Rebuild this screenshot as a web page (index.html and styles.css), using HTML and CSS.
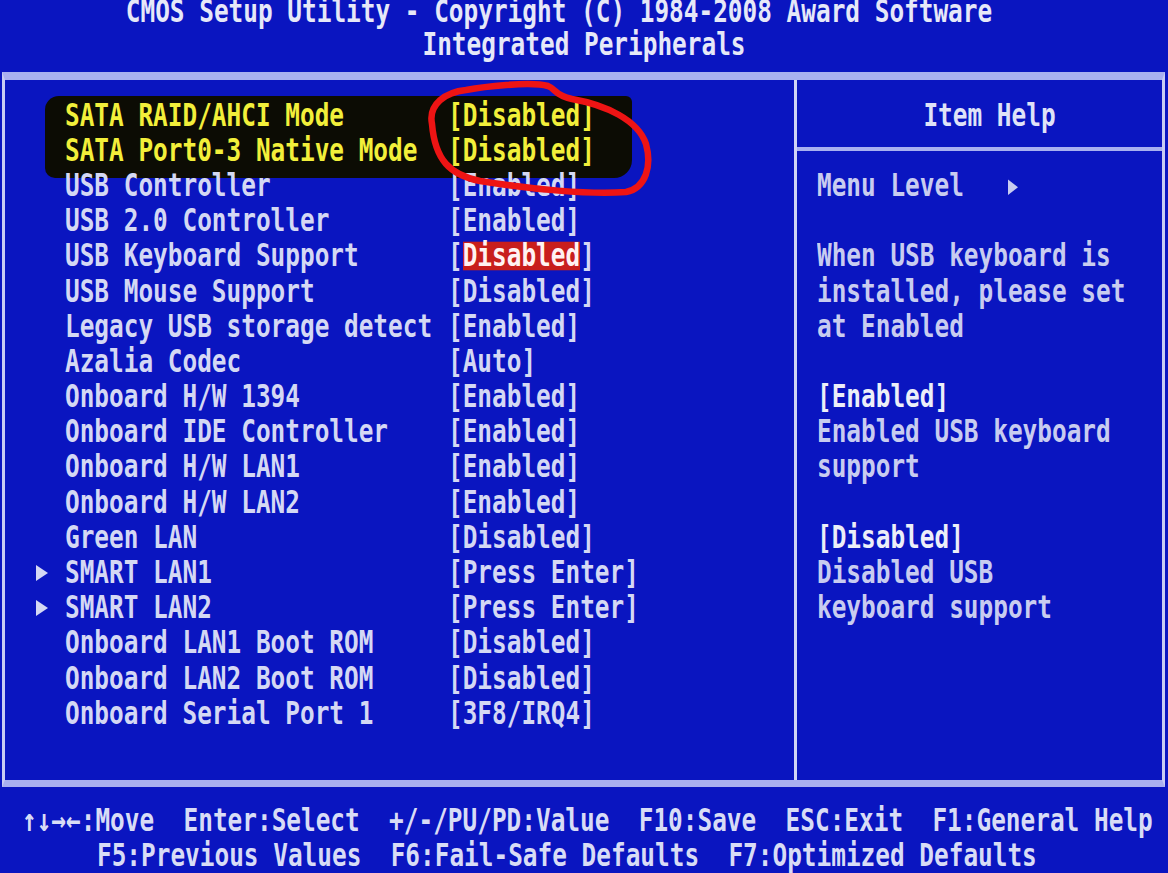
FILE: index.html
```html
<!DOCTYPE html>
<html lang="en">
<head>
  <meta charset="UTF-8">
  <meta name="viewport" content="width=device-width, initial-scale=1.0">
  <title>CMOS Setup Utility - Integrated Peripherals</title>
  <link rel="stylesheet" href="styles.css">
</head>
<body>

  <div class="screen">
    <header class="title">
      <p class="shift">CMOS Setup Utility - Copyright (C) 1984-2008 Award Software</p>
      <p>Integrated Peripherals</p>
    </header>

    <div class="frame">
      <section class="settings">
        <div class="marked">
          <div class="row hl"><span class="arrow"></span><span class="label">SATA RAID/AHCI Mode</span><span class="value">[Disabled]</span></div>
          <div class="row hl"><span class="arrow"></span><span class="label">SATA Port0-3 Native Mode</span><span class="value">[Disabled]</span></div>
        </div>
        <div class="row"><span class="arrow"></span><span class="label">USB Controller</span><span class="value">[Enabled]</span></div>
        <div class="row"><span class="arrow"></span><span class="label">USB 2.0 Controller</span><span class="value">[Enabled]</span></div>
        <div class="row"><span class="arrow"></span><span class="label">USB Keyboard Support</span><span class="value">[<span class="sel">Disabled</span>]</span></div>
        <div class="row"><span class="arrow"></span><span class="label">USB Mouse Support</span><span class="value">[Disabled]</span></div>
        <div class="row"><span class="arrow"></span><span class="label">Legacy USB storage detect</span><span class="value">[Enabled]</span></div>
        <div class="row"><span class="arrow"></span><span class="label">Azalia Codec</span><span class="value">[Auto]</span></div>
        <div class="row"><span class="arrow"></span><span class="label">Onboard H/W 1394</span><span class="value">[Enabled]</span></div>
        <div class="row"><span class="arrow"></span><span class="label">Onboard IDE Controller</span><span class="value">[Enabled]</span></div>
        <div class="row"><span class="arrow"></span><span class="label">Onboard H/W LAN1</span><span class="value">[Enabled]</span></div>
        <div class="row"><span class="arrow"></span><span class="label">Onboard H/W LAN2</span><span class="value">[Enabled]</span></div>
        <div class="row"><span class="arrow"></span><span class="label">Green LAN</span><span class="value">[Disabled]</span></div>
        <div class="row"><span class="arrow on"></span><span class="label">SMART LAN1</span><span class="value">[Press Enter]</span></div>
        <div class="row"><span class="arrow on"></span><span class="label">SMART LAN2</span><span class="value">[Press Enter]</span></div>
        <div class="row"><span class="arrow"></span><span class="label">Onboard LAN1 Boot ROM</span><span class="value">[Disabled]</span></div>
        <div class="row"><span class="arrow"></span><span class="label">Onboard LAN2 Boot ROM</span><span class="value">[Disabled]</span></div>
        <div class="row"><span class="arrow"></span><span class="label">Onboard Serial Port 1</span><span class="value">[3F8/IRQ4]</span></div>
      </section>

      <aside class="help">
        <p class="help-title">Item Help</p>
        <div class="help-rule"></div>
        <p>Menu Level   <span class="tri"></span></p>
        <p class="blank"></p>
        <p>When USB keyboard is</p>
        <p>installed, please set</p>
        <p>at Enabled</p>
        <p class="blank"></p>
        <p class="opt">[Enabled]</p>
        <p>Enabled USB keyboard</p>
        <p>support</p>
        <p class="blank"></p>
        <p class="opt">[Disabled]</p>
        <p>Disabled USB</p>
        <p>keyboard support</p>
      </aside>
    </div>

    <footer class="keys">
      <p class="keys-top">↑↓→←:Move  Enter:Select  +/-/PU/PD:Value  F10:Save  ESC:Exit  F1:General Help</p>
      <p class="keys-bottom">F5:Previous Values  F6:Fail-Safe Defaults  F7:Optimized Defaults</p>
    </footer>

    <!-- red pen mark drawn over the screenshot -->
    <svg class="pen" width="240" height="124" viewBox="0 0 240 124">
      <path d="M 12 46 C 8 26, 26 14, 46 12 C 62 9, 110 3, 128 8 C 136 11, 134 17, 152 21 C 186 27, 218 42, 226 66 C 232 88, 226 110, 206 114 C 170 117, 110 111, 60 103 C 30 97, 15 82, 12 46 Z" fill="none" stroke="#ee1414" stroke-width="6.5" stroke-linejoin="round"/>
    </svg>
  </div>

</body>
</html>
```

FILE: styles.css
```css
body {
  margin: 0;
  padding: 0;
  background-color: #0a15c0;
  color: #d4d8f4;
  font-family: "DejaVu Sans Mono", "Liberation Mono", monospace;
  font-size: 24.4px;
  font-weight: bold;
  line-height: 35.2px;
  overflow: hidden;
}

p {
  margin: 0;
  white-space: pre;
}

.screen {
  position: relative;
}

/* BIOS glyphs are tall and narrow: boxes hug the caps, then stretch */
.title p,
.label,
.value,
.help p,
.keys p {
  line-height: 18px;
  transform: scaleY(1.3);
}

.title {
  display: flex;
  flex-direction: column;
}

.title p {
  text-align: center;
  color: #e6e8f8;
}

/* first line sits right at the top edge of the screen */
.title .shift {
  padding-right: 50px;
  margin-bottom: 17.8px;
  transform-origin: 50% 0;
}

.frame {
  display: flex;
  height: 700px;
  margin: 18.2px 3px 0 2px;
  border: 3px solid #c8ccf4;
  border-top: 8px solid #a9b0f0;
  border-bottom: 7px solid #a9b0f0;
}

.settings {
  flex: 0 0 789px;
  padding: 18px 0 0 28px;
  box-sizing: border-box;
}

.row {
  display: grid;
  grid-template-columns: 32px 383px auto;
  align-items: center;
  height: 35.2px;
  white-space: pre;
}

.arrow.on {
  width: 0;
  height: 0;
  margin-left: 3px;
  border-left: 12px solid #d4d8f4;
  border-top: 8px solid transparent;
  border-bottom: 8px solid transparent;
}

.marked {
  width: 587px;
  margin: -2px 0 -10px 12px;
  padding: 2px 0 10px;
  background-color: #0c0c04;
  border-radius: 14px 6px 18px 10px;
}

.marked .row {
  margin-left: -12px;
}

.row.hl {
  color: #f2ef3a;
}

.sel {
  display: inline-block;
  line-height: 22px;
  background-color: #c81e1c;
  color: #fff2f2;
}

.help {
  flex: 1;
  display: flex;
  flex-direction: column;
  padding-top: 18px;
  border-left: 3px solid #d0d4f6;
}

.help p {
  margin: 8.6px 0;
  padding-left: 20px;
  color: #c8ccf0;
}

.help .help-title {
  text-align: center;
  color: #dfe2f8;
}

.help-rule {
  height: 4px;
  margin: 14px 0 17.2px;
  background-color: #a9b0f0;
}

.help .blank {
  height: 18px;
}

.help .opt {
  color: #eceef8;
}

.tri {
  display: inline-block;
  width: 0;
  height: 0;
  border-left: 10px solid #c8ccf0;
  border-top: 6px solid transparent;
  border-bottom: 6px solid transparent;
  vertical-align: 1px;
}

.keys {
  display: flex;
  flex-direction: column;
  margin-top: 16px;
}

.keys p {
  margin: 8.6px 0;
  color: #d8dcf6;
}

.keys-top {
  padding-left: 22px;
}

.keys-bottom {
  padding-left: 97px;
}

.pen {
  position: absolute;
  left: 420px;
  top: 78px;
  overflow: visible;
}
```
